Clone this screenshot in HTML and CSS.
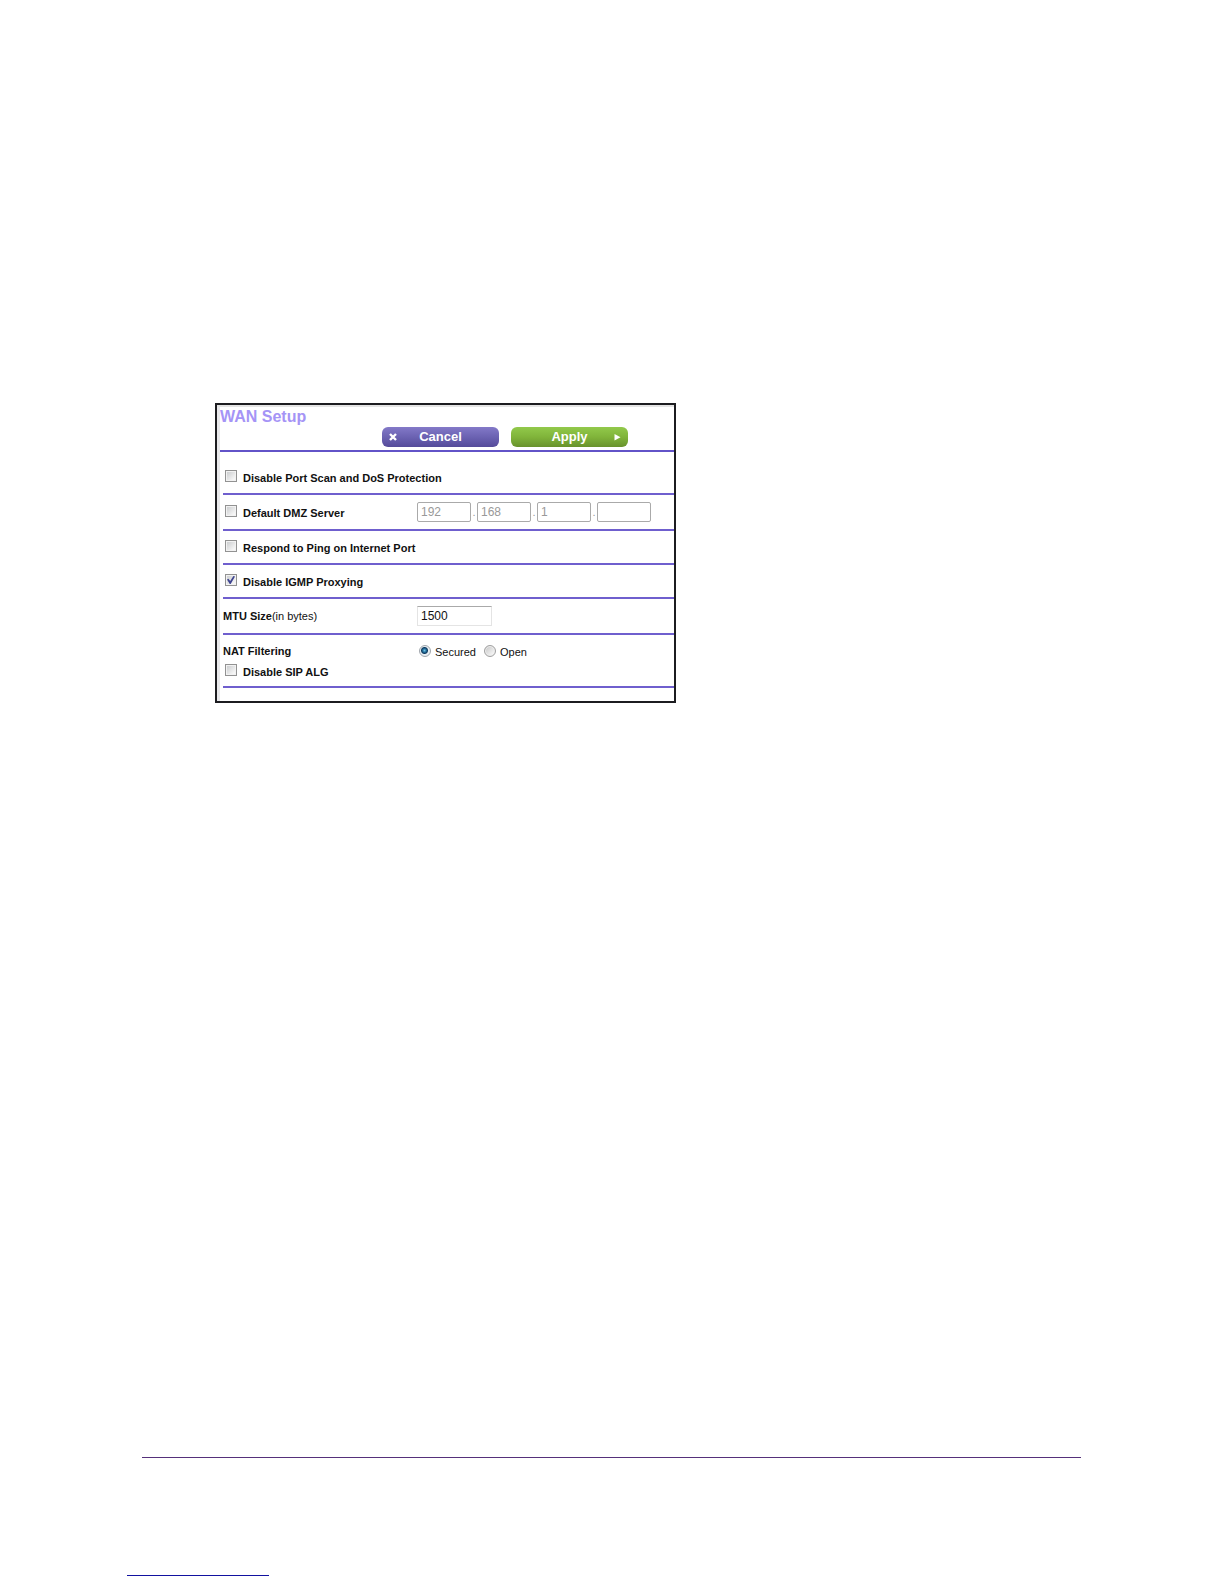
FILE: index.html
```html
<!DOCTYPE html>
<html lang="en">
<head>
<meta charset="utf-8">
<meta name="viewport" content="width=device-width, initial-scale=1">
<title>WAN Setup</title>
<link rel="stylesheet" href="styles.css">
</head>
<body>
<main class="page">
  <form class="panel">
    <header class="panel-header">
      <h1 class="title">WAN Setup</h1>
      <div class="actions">
        <button class="btn btn-cancel" type="button">
          <svg class="btn-icon" viewBox="0 0 8 8" aria-hidden="true"><path d="M1 1L7 7M7 1L1 7" stroke="#fff" stroke-width="2.4" fill="none"/></svg>
          <span>Cancel</span>
        </button>
        <button class="btn btn-apply" type="button">
          <span>Apply</span>
          <svg class="btn-icon" viewBox="0 0 8 8" aria-hidden="true"><path d="M1.5 1L7.5 4.3L1.5 7.6Z" fill="#fff"/></svg>
        </button>
      </div>
    </header>

    <div class="rows">
      <div class="row row-first">
        <label class="option"><input class="check" type="checkbox"><span>Disable Port Scan and DoS Protection</span></label>
      </div>
      <div class="row row-field">
        <label class="option"><input class="check" type="checkbox"><span>Default DMZ Server</span></label>
        <div class="address">
          <input class="octet" type="text" value="192" aria-label="First octet" disabled>
          <span class="dot">.</span>
          <input class="octet" type="text" value="168" aria-label="Second octet" disabled>
          <span class="dot">.</span>
          <input class="octet" type="text" value="1" aria-label="Third octet" disabled>
          <span class="dot">.</span>
          <input class="octet" type="text" value="" aria-label="Fourth octet" disabled>
        </div>
      </div>
      <div class="row">
        <label class="option"><input class="check" type="checkbox"><span>Respond to Ping on Internet Port</span></label>
      </div>
      <div class="row">
        <label class="option"><input class="check" type="checkbox" checked><span>Disable IGMP Proxying</span></label>
      </div>
      <div class="row row-field">
        <label class="name" for="mtu">MTU Size<span class="unit">(in bytes)</span></label>
        <input class="mtu" id="mtu" type="text" value="1500">
      </div>
      <div class="row row-double">
        <span class="name" id="nat">NAT Filtering</span>
        <div class="choices" role="radiogroup" aria-labelledby="nat">
          <label class="choice"><input class="radio" type="radio" name="nat" checked><span>Secured</span></label>
          <label class="choice"><input class="radio" type="radio" name="nat"><span>Open</span></label>
        </div>
        <label class="option"><input class="check" type="checkbox"><span>Disable SIP ALG</span></label>
      </div>
    </div>
  </form>
</main>
<footer class="footer">
  <hr class="page-rule">
  <hr class="link-rule">
</footer>
</body>
</html>
```
FILE: styles.css
```css
* {
  box-sizing: border-box;
}

body {
  margin: 0;
  min-height: 100vh;
  display: flex;
  flex-direction: column;
  background: #fff;
  color: #111;
  font: 11px/20px "Liberation Sans", Arial, sans-serif;
}

.page {
  padding: 403px 16px 40px 215px;
}

.panel {
  max-width: 461px;
  padding: 2px 0 13px 3px;
  border: 2px solid #1c1c20;
  background: linear-gradient(#e4e4e4, #e4e4e4) 0 0 / 100% 2px no-repeat,
    linear-gradient(#e9e9eb, #e9e9eb) 0 0 / 3px 100% no-repeat, #fff;
}

.panel-header {
  padding-bottom: 3px;
  border-bottom: 2px solid #6253c8;
}

.title {
  margin: 0;
  color: #a594f6;
  font-size: 16px;
  line-height: 20px;
}

.actions {
  display: flex;
  justify-content: flex-end;
  gap: 12px;
  padding-right: 46px;
}

.btn {
  display: grid;
  grid-template-columns: 8px 1fr 8px;
  align-items: center;
  width: 117px;
  height: 20px;
  padding: 0 7px;
  border: 0;
  border-radius: 6px;
  color: #fff;
  font: bold 13px/18px "Liberation Sans", Arial, sans-serif;
}

.btn span {
  grid-column: 2;
}

.btn-icon {
  display: block;
  width: 8px;
  height: 8px;
}

.btn-cancel {
  background: linear-gradient(#8379c8, #6b62b2 50%, #554b99);
}

.btn-apply {
  background: linear-gradient(#92c94b, #80b43a 50%, #68922c);
}

.rows {
  margin-left: 3px;
}

.row {
  display: grid;
  grid-template-columns: 194px 1fr;
  align-items: center;
  min-height: 34px;
  border-bottom: 2px solid #6f5fce;
}

.row-first {
  min-height: 43px;
  padding-top: 9px;
}

.row-field {
  min-height: 36px;
}

.row-double {
  padding: 6px 0 5px;
}

.option,
.choice {
  display: flex;
  align-items: center;
}

.option {
  gap: 6px;
  padding-left: 2px;
  font-weight: bold;
  white-space: nowrap;
}

.option span,
.choice span {
  padding-top: 2px;
  line-height: 18px;
}

.name {
  font-weight: bold;
}

.unit {
  font-weight: normal;
}

.check {
  appearance: none;
  display: grid;
  place-items: center;
  flex: none;
  width: 12px;
  height: 12px;
  margin: 0 0 2px;
  border: 1px solid #929292;
  background: linear-gradient(135deg, #c6c8ca, #f6f6f6 80%);
  box-shadow: inset 0 0 0 1px #f2f2f2;
}

.check:checked::before {
  content: "";
  width: 8px;
  height: 8px;
  background: #3f4590;
  clip-path: polygon(0 45%, 18% 35%, 40% 62%, 80% 0, 100% 6%, 46% 100%, 34% 100%);
}

.address {
  display: flex;
  align-items: center;
}

.octet,
.mtu {
  height: 20px;
  padding: 0 3px;
  background: #fff;
  font: 12px/18px "Liberation Sans", Arial, sans-serif;
}

.octet {
  width: 54px;
  border: 1px solid #aaa;
  border-radius: 2px;
  color: #999;
}

.dot {
  width: 6px;
  color: #999;
  text-align: center;
}

.mtu {
  width: 75px;
  border: 1px solid #e4e4e4;
  border-top-color: #aaa;
  color: #111;
}

.choices {
  display: flex;
  gap: 8px;
  padding-left: 2px;
}

.choice {
  gap: 4px;
}

.radio {
  appearance: none;
  width: 12px;
  height: 12px;
  margin: 0;
  border: 1px solid #a0a0a0;
  border-radius: 50%;
  background: linear-gradient(135deg, #c4c4c4, #f4f4f4 80%);
  box-shadow: inset 0 0 0 1px #eee;
}

.radio:checked {
  border-color: #a0a6ac;
  background: radial-gradient(circle at 45% 45%, #6fc4e6 0, #1c6490 2px, #123c60 3px, #e8eef2 4px);
  box-shadow: none;
}

.footer {
  margin-top: auto;
  padding: 0 143px 8px 127px;
}

.page-rule,
.link-rule {
  height: 1px;
  border: 0;
}

.page-rule {
  margin: 0 0 117px 15px;
  background: #55307a;
}

.link-rule {
  max-width: 142px;
  margin: 0;
  background: #1212a0;
}
```
